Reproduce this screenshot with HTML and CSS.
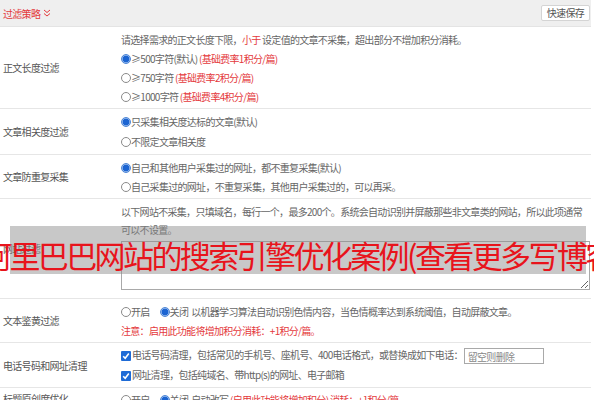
FILE: index.html
```html
<!DOCTYPE html>
<html lang="zh-CN">
<head>
    <meta charset="UTF-8">
    <meta name="viewport" content="width=device-width, initial-scale=1.0">
    <title>过滤策略</title>
    <link rel="stylesheet" href="styles.css">
</head>
<body>
    <div class="panel">
        <div class="panel-head">
            <span class="panel-title">过滤策略
                <svg class="chevron" width="8" height="8" viewBox="0 0 8 8"><polyline points="1,1 4,3.5 7,1" /><polyline points="1,4.5 4,7 7,4.5" /></svg>
            </span>
            <button class="quick-save">快速保存</button>
        </div>

        <div class="row row-len">
            <div class="row-label">正文长度过滤</div>
            <div class="row-body">
                <p>请选择需求的正文长度下限，<span class="red">小于</span> 设定值的文章不采集，超出部分不增加积分消耗。</p>
                <label><input type="radio" name="len" checked>≥500字符(默认) <span class="red">(基础费率1积分/篇)</span></label>
                <label><input type="radio" name="len">≥750字符 <span class="red">(基础费率2积分/篇)</span></label>
                <label><input type="radio" name="len">≥1000字符 <span class="red">(基础费率4积分/篇)</span></label>
            </div>
        </div>

        <div class="row row-rel">
            <div class="row-label">文章相关度过滤</div>
            <div class="row-body">
                <label><input type="radio" name="rel" checked>只采集相关度达标的文章(默认)</label>
                <label><input type="radio" name="rel">不限定文章相关度</label>
            </div>
        </div>

        <div class="row row-dup">
            <div class="row-label">文章防重复采集</div>
            <div class="row-body">
                <label><input type="radio" name="dup" checked>自己和其他用户采集过的网址，都不重复采集(默认)</label>
                <label><input type="radio" name="dup">自己采集过的网址，不重复采集，其他用户采集过的，可以再采。</label>
            </div>
        </div>

        <div class="row row-site">
            <div class="row-label">网站过滤</div>
            <div class="row-body">
                <p>以下网站不采集，只填域名，每行一个，最多200个。系统会自动识别并屏蔽那些非文章类的网站，所以此项通常可以不设置。</p>
                <textarea class="site-list"></textarea>
            </div>
        </div>

        <div class="row row-porn">
            <div class="row-label">文本鉴黄过滤</div>
            <div class="row-body">
                <p><label class="opt"><input type="radio" name="porn">开启</label><label class="opt opt-last"><input type="radio" name="porn" checked>关闭</label>以机器学习算法自动识别色情内容，当色情概率达到系统阈值，自动屏蔽文章。</p>
                <p class="red">注意：启用此功能将增加积分消耗：+1积分/篇。</p>
            </div>
        </div>

        <div class="row row-clean">
            <div class="row-label">电话号码和网址清理</div>
            <div class="row-body">
                <label><span class="check"><svg width="8" height="8" viewBox="0 0 8 8"><polyline points="1.2,4.2 3.2,6.2 6.8,1.6" /></svg></span>电话号码清理，包括常见的手机号、座机号、400电话格式，或替换成如下电话：<input type="text" class="phone" placeholder="留空则删除"></label>
                <label><span class="check"><svg width="8" height="8" viewBox="0 0 8 8"><polyline points="1.2,4.2 3.2,6.2 6.8,1.6" /></svg></span>网址清理，包括纯域名、带http(s)的网址、电子邮箱</label>
            </div>
        </div>

        <div class="row row-title">
            <div class="row-label">标题原创度优化</div>
            <div class="row-body">
                <p><label class="opt"><input type="radio" name="title">开启</label><label class="opt opt-last"><input type="radio" name="title" checked>关闭</label>自动改写 <span class="red">(启用此功能将增加积分)</span> <span class="red">消耗：+1积分/篇</span></p>
            </div>
        </div>

        <div class="ad-overlay"><span>阿里巴巴网站的搜索引擎优化案例(查看更多写博客</span></div>
    </div>
</body>
</html>
```

FILE: styles.css
```css
html, body {
    margin: 0;
    overflow: hidden;
    background-color: #fff;
}
body {
    font-family: "Noto Sans CJK SC", "Microsoft YaHei", sans-serif;
    font-size: 10px;
    letter-spacing: -0.7px;
    color: #666;
}
.panel {
    position: relative;
    width: 591px;
}
.panel-head {
    display: flex;
    align-items: center;
    justify-content: space-between;
    height: 26px;
    padding: 0 1px 0 3px;
    background-color: #efefef;
    border-bottom: 1px solid #e4e4e4;
}
.panel-title {
    color: #e4393c;
    display: flex;
    align-items: center;
    gap: 3px;
}
.chevron {
    fill: none;
    stroke: #e4393c;
    stroke-width: 1;
}
.quick-save {
    font-family: inherit;
    font-size: 10px;
    letter-spacing: -0.7px;
    color: #555;
    background-color: #fff;
    border: 1px solid #d4d4d4;
    border-radius: 2px;
    padding: 0 5px;
    height: 16px;
    line-height: 14px;
}
.row {
    display: flex;
    align-items: center;
    border-bottom: 1px solid #e6e6e6;
}
.row-label {
    width: 118px;
    padding-left: 3px;
    color: #555;
    flex-shrink: 0;
}
.row-body {
    flex: 1;
    padding-right: 6px;
}
.row-body p,
.row-body label {
    display: block;
    margin: 0;
    white-space: nowrap;
}
.row-body .opt {
    display: inline;
    margin-right: 10px;
}
.row-body .opt-last {
    margin-right: 3px;
}
.red {
    color: #e4393c;
}
.row-len .row-body { padding-top: 3px; padding-bottom: 2px; line-height: 19px; }
.row-rel .row-body { padding-top: 3px; padding-bottom: 2px; line-height: 20px; }
.row-dup .row-body { padding-top: 3px; padding-bottom: 2px; line-height: 19px; }
.row-site .row-body { padding-top: 4px; padding-bottom: 8px; line-height: 18px; }
.row-porn .row-body { padding-top: 3px; padding-bottom: 2px; line-height: 19px; }
.row-clean .row-body { padding-top: 2px; padding-bottom: 2px; line-height: 20px; }
.row-title .row-body { padding-top: 2px; line-height: 19px; }
.row-site .row-body p {
    white-space: normal;
}
input[type="radio"] {
    appearance: none;
    width: 10px;
    height: 10px;
    margin: 0;
    border: 1px solid #8a8a8a;
    border-radius: 50%;
    background-color: #fff;
    vertical-align: -1px;
}
input[type="radio"]:checked {
    border-color: #4d86d6;
    background: radial-gradient(circle, #1b64d2 0 3px, #8fb4ea 3.6px);
}
.check {
    display: inline-flex;
    align-items: center;
    justify-content: center;
    width: 10px;
    height: 10px;
    margin-right: 1px;
    background-color: #1e6bd6;
    border-radius: 1px;
    vertical-align: -1px;
}
.check svg {
    fill: none;
    stroke: #fff;
    stroke-width: 1.6;
}
.site-list {
    display: block;
    box-sizing: border-box;
    width: 469px;
    height: 49px;
    margin-top: 2px;
    border: 1px solid #a9a9a9;
    border-radius: 0;
}
.phone {
    box-sizing: border-box;
    width: 80px;
    height: 16px;
    margin-left: 1px;
    padding: 0 3px;
    font-family: inherit;
    font-size: 10px;
    letter-spacing: -0.7px;
    border: 1px solid #a9a9a9;
    vertical-align: middle;
}
.phone::placeholder {
    color: #888;
}
.ad-overlay {
    position: absolute;
    left: 10px;
    top: 226px;
    width: 576px;
    height: 48px;
    background-color: rgba(140, 140, 140, 0.48);
}
.ad-overlay span {
    display: block;
    margin: 13px 0 0 -29px;
    white-space: nowrap;
    font-size: 31px;
    line-height: 31px;
    letter-spacing: -2.6px;
    color: #e8141c;
}
```
